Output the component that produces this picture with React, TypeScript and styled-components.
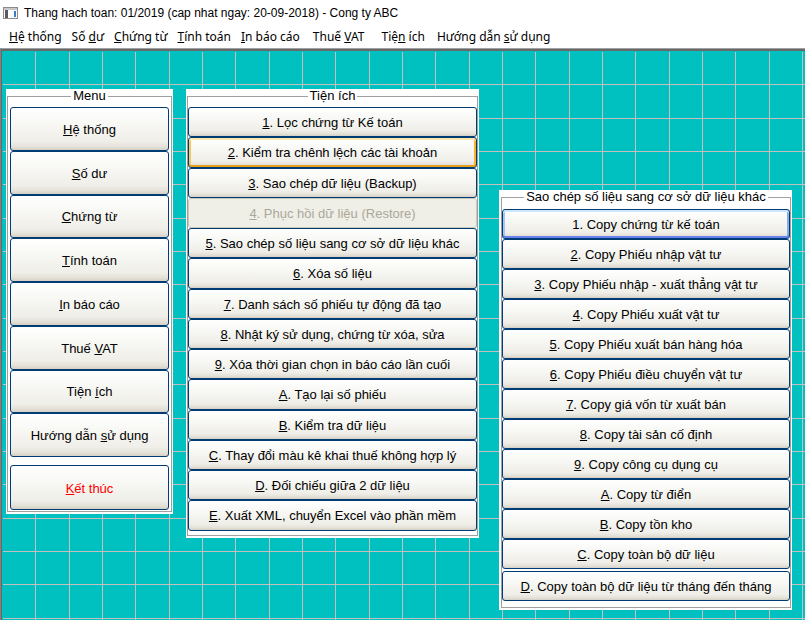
import React from "react";
import styled, { createGlobalStyle, css } from "styled-components";

const GlobalStyle = createGlobalStyle`
  html, body { margin: 0; padding: 0; background: #fff; overflow: hidden; }
  body { font-family: "Liberation Sans", Arial, sans-serif; }
  #root { width: 805px; height: 620px; }
  * { box-sizing: border-box; }
`;

const Window = styled.div`
  width: 805px;
  height: 620px;
  display: flex;
  flex-direction: column;
  background: #fff;
`;

const TitleBar = styled.div`
  height: 25px;
  flex: none;
  display: flex;
  align-items: center;
  gap: 6px;
  padding-left: 3px;
  font: 12px "Liberation Sans", Arial, sans-serif;
  color: #000;
`;

const MenuBar = styled.div`
  height: 23px;
  flex: none;
  display: flex;
  align-items: center;
  padding-left: 4px;
  font: 12px "Noto Sans", sans-serif;
  color: #000;
`;

const MenuItem = styled.span<{ $extra?: number }>`
  padding: 0 ${(p) => 5 + (p.$extra ?? 0)}px 0 5px;
  white-space: nowrap;
`;

const Workspace = styled.div`
  flex: 1;
  display: flex;
  border-top: 1px solid #a0a0a0;
  border-left: 1px solid #808080;
  background: #00c0c0;
  padding: 3px 0 0 2px;
  box-shadow: inset 1px 2px 0 #696969;
  min-height: 0;
`;

const gridLines = (dir: string) => `linear-gradient(${dir},
  transparent 32px, #c4c0c0 32px, #c4c0c0 33px, transparent 33px,
  transparent 66px, #c4c0c0 66px, #c4c0c0 67px, transparent 67px,
  transparent 99px, #c4c0c0 99px)`;

const Canvas = styled.div`
  flex: 1;
  display: flex;
  align-items: flex-start;
  padding: 37px 0 0 3px;
  background-color: #00c0c0;
  background-image: ${gridLines("to right")}, ${gridLines("to bottom")};
  background-size: 100px 100px;
`;

const Panel = styled.div<{ $w: number; $ml?: number; $mt?: number; $pl: number; $pb: number }>`
  flex: none;
  width: ${(p) => p.$w}px;
  margin-left: ${(p) => p.$ml ?? 0}px;
  margin-top: ${(p) => p.$mt ?? 0}px;
  background: #fff;
  padding: 0 1px ${(p) => p.$pb}px ${(p) => p.$pl}px;
`;

const Group = styled.fieldset<{ $pt: number; $px: number; $pb: number }>`
  margin: 0;
  min-width: 0;
  border: 1px solid #a0a0a0;
  padding: ${(p) => p.$pt}px ${(p) => p.$px}px ${(p) => p.$pb}px ${(p) => p.$px}px;
`;

const Legend = styled.legend`
  margin: 0 auto;
  padding: 0 2px;
  font: 13px/14px "Liberation Sans", Arial, sans-serif;
  color: #000;
  white-space: nowrap;
`;

const Stack = styled.div`
  display: flex;
  flex-direction: column;
`;

type BtnState = "normal" | "hover" | "focus" | "disabled";

const stateStyles = {
  normal: css``,
  hover: css`
    box-shadow: inset 0 2px 0 #ffe7b0, inset 0 -2px 0 #e5a01a, inset 2px 0 0 #fbc860,
      inset -2px 0 0 #f8b330;
  `,
  focus: css`
    box-shadow: inset 0 2px 0 #cee7ff, inset 0 -2px 0 #6982ee, inset 2px 0 0 #a9c2f2,
      inset -2px 0 0 #89ade4;
  `,
  disabled: css`
    border-color: #c9c7ba;
    background: #efeee7;
    color: #aca899;
  `,
};

const Btn = styled.button<{ $h: number; $mt?: number; $state: BtnState; $danger?: boolean }>`
  flex: none;
  display: flex;
  align-items: center;
  justify-content: center;
  width: 100%;
  height: ${(p) => p.$h}px;
  margin: ${(p) => p.$mt ?? 0}px 0 0 0;
  padding: 1px 0 0 0;
  border: 1px solid #003c74;
  border-radius: 3px;
  background: linear-gradient(
    180deg,
    #ffffff 0%,
    #f8f8f5 35%,
    #efeee8 80%,
    #e4e1d8 92%,
    #d6d0c5 100%
  );
  font: 13px "Liberation Sans", Arial, sans-serif;
  color: ${(p) => (p.$danger ? "#ff0000" : "#000")};
  white-space: nowrap;
  cursor: default;
  ${(p) => stateStyles[p.$state]}
`;

type Item = {
  pre?: string;
  key?: string;
  post: string;
  state?: BtnState;
  danger?: boolean;
  mt?: number;
  h?: number;
  extra?: number;
};

const menuBar: Item[] = [
  { key: "H", post: "ệ thống" },
  { pre: "Số ", key: "d", post: "ư" },
  { key: "C", post: "hứng từ" },
  { key: "T", post: "ính toán" },
  { key: "I", post: "n báo cáo", extra: 3 },
  { pre: "Thuế ", key: "V", post: "AT", extra: 7 },
  { pre: "Tiệ", key: "n", post: " ích", extra: 2 },
  { pre: "Hướng dẫn ", key: "s", post: "ử dụng" },
];

const leftMenu: Item[] = [
  { key: "H", post: "ệ thống" },
  { key: "S", post: "ố dư" },
  { key: "C", post: "hứng từ" },
  { key: "T", post: "ính toán" },
  { key: "I", post: "n báo cáo" },
  { pre: "Thuế ", key: "V", post: "AT" },
  { pre: "Tiện ", key: "í", post: "ch" },
  { pre: "Hướng dẫn ", key: "s", post: "ử dụng" },
];

const utilities: Item[] = [
  { key: "1", post: ". Lọc chứng từ Kế toán" },
  { key: "2", post: ". Kiểm tra chênh lệch các tài khoản", state: "hover" },
  { key: "3", post: ". Sao chép dữ liệu (Backup)" },
  { key: "4", post: ". Phục hồi dữ liệu (Restore)", state: "disabled" },
  { key: "5", post: ". Sao chép số liệu sang cơ sở dữ liệu khác" },
  { key: "6", post: ". Xóa số liệu" },
  { key: "7", post: ". Danh sách số phiếu tự động đã tạo" },
  { key: "8", post: ". Nhật ký sử dụng, chứng từ xóa, sửa" },
  { key: "9", post: ". Xóa thời gian chọn in báo cáo lần cuối" },
  { key: "A", post: ". Tạo lại số phiếu" },
  { key: "B", post: ". Kiểm tra dữ liệu" },
  { key: "C", post: ". Thay đổi màu kê khai thuế không hợp lý" },
  { key: "D", post: ". Đối chiếu giữa 2 dữ liệu" },
  { key: "E", post: ". Xuất XML, chuyển Excel vào phần mềm" },
];

const copies: Item[] = [
  { post: "1. Copy chứng từ kế toán", state: "focus" },
  { key: "2", post: ". Copy Phiếu nhập vật tư" },
  { key: "3", post: ". Copy Phiếu nhập - xuất thẳng vật tư" },
  { key: "4", post: ". Copy Phiếu xuất vật tư" },
  { key: "5", post: ". Copy Phiếu xuất bán hàng hóa" },
  { key: "6", post: ". Copy Phiếu điều chuyển vật tư" },
  { key: "7", post: ". Copy giá vốn từ xuất bán" },
  { key: "8", post: ". Copy tài sản cố định" },
  { key: "9", post: ". Copy công cụ dụng cụ" },
  { key: "A", post: ". Copy từ điển" },
  { key: "B", post: ". Copy tồn kho" },
  { key: "C", post: ". Copy toàn bộ dữ liệu" },
  { key: "D", post: ". Copy toàn bộ dữ liệu từ tháng đến tháng", mt: 2 },
];

const Label: React.FC<{ item: Item }> = ({ item }) => (
  <span>
    {item.pre}
    {item.key && <u>{item.key}</u>}
    {item.post}
  </span>
);

const AppIcon = () => (
  <svg width="15" height="12" viewBox="0 0 15 12">
    <rect x="0.5" y="0.5" width="14" height="11" fill="#fff" stroke="#8a8a8a" />
    <rect x="1" y="1" width="13" height="2" fill="#c8c8c8" />
    <rect x="2" y="3" width="3" height="8" fill="#5a5a5a" />
    <rect x="11" y="4" width="2" height="6" fill="#3b7fc4" />
  </svg>
);

const ButtonList: React.FC<{ items: Item[]; h: number }> = ({ items, h }) => (
  <Stack>
    {items.map((it, i) => (
      <Btn
        key={i}
        $h={it.h ?? h}
        $mt={it.mt}
        $state={it.state ?? "normal"}
        $danger={it.danger}
      >
        <Label item={it} />
      </Btn>
    ))}
  </Stack>
);

export default function App() {
  return (
    <>
      <GlobalStyle />
      <Window>
        <TitleBar>
          <AppIcon />
          <span>Thang hach toan: 01/2019 (cap nhat ngay: 20-09-2018) - Cong ty ABC</span>
        </TitleBar>
        <MenuBar>
          {menuBar.map((m, i) => (
            <MenuItem key={i} $extra={m.extra}>
              <Label item={m} />
            </MenuItem>
          ))}
        </MenuBar>
        <Workspace>
          <Canvas>
            <Panel $w={167} $pl={1} $pb={2}>
              <Group $pt={4} $px={2} $pb={1}>
                <Legend>Menu</Legend>
                <ButtonList
                  h={43.75}
                  items={[
                    ...leftMenu,
                    { key: "K", post: "ết thúc", danger: true, mt: 8, h: 45 },
                  ]}
                />
              </Group>
            </Panel>
            <Panel $w={293} $ml={13} $pl={1} $pb={2}>
              <Group $pt={4} $px={0} $pb={4}>
                <Legend>Tiện ích</Legend>
                <ButtonList h={30.25} items={utilities} />
              </Group>
            </Panel>
            <Panel $w={293} $ml={20} $mt={101} $pl={2} $pb={2}>
              <Group $pt={5} $px={0} $pb={6}>
                <Legend>Sao chép số liệu sang cơ sở dữ liệu khác</Legend>
                <ButtonList h={30} items={copies} />
              </Group>
            </Panel>
          </Canvas>
        </Workspace>
      </Window>
    </>
  );
}
